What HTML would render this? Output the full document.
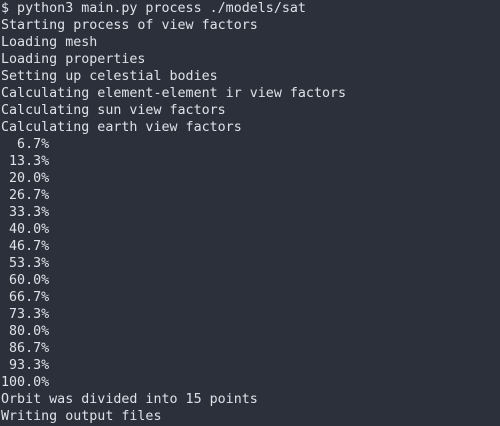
<html><head><style>
body{margin:0;background:#2b303b;width:500px;height:426px;overflow:hidden}
pre{margin:0;padding:0 0 0 1px;font-family:"DejaVu Sans Mono",monospace;font-size:13.33px;line-height:17px;color:#dfe1e8}
</style></head><body><pre>$ python3 main.py process ./models/sat
Starting process of view factors
Loading mesh
Loading properties
Setting up celestial bodies
Calculating element-element ir view factors
Calculating sun view factors
Calculating earth view factors
  6.7%
 13.3%
 20.0%
 26.7%
 33.3%
 40.0%
 46.7%
 53.3%
 60.0%
 66.7%
 73.3%
 80.0%
 86.7%
 93.3%
100.0%
Orbit was divided into 15 points
Writing output files</pre></body></html>
